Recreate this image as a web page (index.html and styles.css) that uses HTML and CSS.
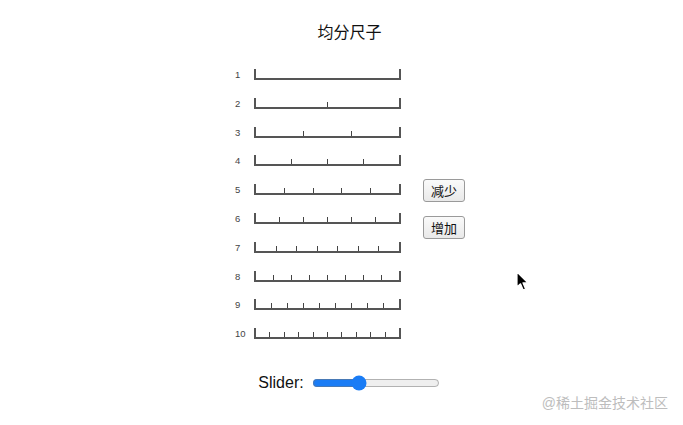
FILE: index.html
```html
<!DOCTYPE html>
<html lang="zh">
<head>
<meta charset="utf-8">
<title>均分尺子</title>
<link rel="stylesheet" href="styles.css">
</head>
<body>
<div class="page">
  <h1 class="title">均分尺子</h1>
  <div class="main">
    <div class="rulers">
      <div class="row"><span class="label">1</span><div class="ruler"><span class="seg"></span></div></div>
      <div class="row"><span class="label">2</span><div class="ruler"><span class="seg"></span><span class="tick"></span><span class="seg"></span></div></div>
      <div class="row"><span class="label">3</span><div class="ruler"><span class="seg"></span><span class="tick"></span><span class="seg"></span><span class="tick"></span><span class="seg"></span></div></div>
      <div class="row"><span class="label">4</span><div class="ruler"><span class="seg"></span><span class="tick"></span><span class="seg"></span><span class="tick"></span><span class="seg"></span><span class="tick"></span><span class="seg"></span></div></div>
      <div class="row"><span class="label">5</span><div class="ruler"><span class="seg"></span><span class="tick"></span><span class="seg"></span><span class="tick"></span><span class="seg"></span><span class="tick"></span><span class="seg"></span><span class="tick"></span><span class="seg"></span></div></div>
      <div class="row"><span class="label">6</span><div class="ruler"><span class="seg"></span><span class="tick"></span><span class="seg"></span><span class="tick"></span><span class="seg"></span><span class="tick"></span><span class="seg"></span><span class="tick"></span><span class="seg"></span><span class="tick"></span><span class="seg"></span></div></div>
      <div class="row"><span class="label">7</span><div class="ruler"><span class="seg"></span><span class="tick"></span><span class="seg"></span><span class="tick"></span><span class="seg"></span><span class="tick"></span><span class="seg"></span><span class="tick"></span><span class="seg"></span><span class="tick"></span><span class="seg"></span><span class="tick"></span><span class="seg"></span></div></div>
      <div class="row"><span class="label">8</span><div class="ruler"><span class="seg"></span><span class="tick"></span><span class="seg"></span><span class="tick"></span><span class="seg"></span><span class="tick"></span><span class="seg"></span><span class="tick"></span><span class="seg"></span><span class="tick"></span><span class="seg"></span><span class="tick"></span><span class="seg"></span><span class="tick"></span><span class="seg"></span></div></div>
      <div class="row"><span class="label">9</span><div class="ruler"><span class="seg"></span><span class="tick"></span><span class="seg"></span><span class="tick"></span><span class="seg"></span><span class="tick"></span><span class="seg"></span><span class="tick"></span><span class="seg"></span><span class="tick"></span><span class="seg"></span><span class="tick"></span><span class="seg"></span><span class="tick"></span><span class="seg"></span><span class="tick"></span><span class="seg"></span></div></div>
      <div class="row"><span class="label">10</span><div class="ruler"><span class="seg"></span><span class="tick"></span><span class="seg"></span><span class="tick"></span><span class="seg"></span><span class="tick"></span><span class="seg"></span><span class="tick"></span><span class="seg"></span><span class="tick"></span><span class="seg"></span><span class="tick"></span><span class="seg"></span><span class="tick"></span><span class="seg"></span><span class="tick"></span><span class="seg"></span><span class="tick"></span><span class="seg"></span></div></div>
    </div>
    <div class="buttons">
      <button class="btn" type="button">减少</button>
      <button class="btn" type="button">增加</button>
    </div>
  </div>
  <div class="slider-row">
    <label class="slider-label" for="s">Slider:</label>
    <input class="slider" id="s" type="range" min="0" max="100" value="35">
  </div>
</div>
<div class="watermark">@稀土掘金技术社区</div>
<svg class="cursor" width="14" height="22" viewBox="0 0 14 22" aria-hidden="true">
  <path d="M1 1 L1 16 L4.5 12.8 L7.2 19 L9.6 18 L7 11.9 L11.8 11.9 Z" fill="#000" stroke="#fff" stroke-width="1.2" stroke-linejoin="round"/>
</svg>
</body>
</html>
```

FILE: styles.css
```css
html, body {
  margin: 0;
  padding: 0;
  background: #ffffff;
}

body {
  width: 683px;
  height: 425px;
  overflow: hidden;
  position: relative;
  font-family: "Liberation Sans", "Noto Sans CJK SC", sans-serif;
  color: #111;
}

.page {
  display: flex;
  flex-direction: column;
  align-items: center;
  padding-left: 16px;
}

.title {
  margin: 0;
  padding-top: 23px;
  font-size: 16px;
  line-height: 20px;
  font-weight: normal;
  color: #111;
}

.main {
  display: flex;
  align-items: flex-start;
  margin-top: 26px;
}

.rulers {
  display: flex;
  flex-direction: column;
  gap: 17.8px;
}

.row {
  display: flex;
  align-items: center;
  height: 11px;
}

.label {
  width: 20px;
  padding-left: 1px;
  box-sizing: border-box;
  font-size: 9.5px;
  color: #444;
  line-height: 11px;
}

.ruler {
  box-sizing: border-box;
  width: 147px;
  height: 11px;
  border: 2px solid #555;
  border-top: none;
  display: flex;
  align-items: flex-end;
}

.seg {
  flex: 1;
}

.tick {
  width: 1px;
  height: 5px;
  background: #444;
}

.buttons {
  display: flex;
  flex-direction: column;
  gap: 14px;
  margin-left: 22px;
  margin-top: 110px;
}

.btn {
  box-sizing: border-box;
  width: 42px;
  height: 23px;
  padding: 0;
  font-family: "Liberation Sans", "Noto Sans CJK SC", sans-serif;
  font-size: 13px;
  color: #111;
  background: linear-gradient(#fafafa, #e9e9e9);
  border: 1px solid #9a9a9a;
  border-radius: 3px;
}

.slider-row {
  display: flex;
  align-items: center;
  gap: 8px;
  margin-top: 35px;
  margin-left: -1px;
}

.slider-label {
  font-size: 16px;
  color: #111;
}

.slider {
  width: 128px;
  margin: 0;
  accent-color: #1a7cf5;
}

.watermark {
  position: absolute;
  right: 15px;
  top: 393px;
  font-size: 14px;
  line-height: 20px;
  color: #bdbdbd;
}

.cursor {
  position: absolute;
  left: 516px;
  top: 271px;
}
```
